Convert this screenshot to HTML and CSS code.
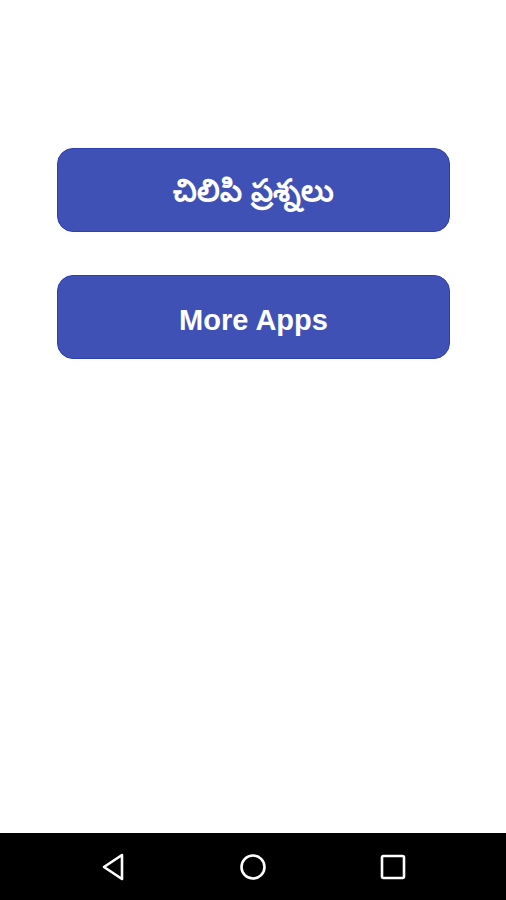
FILE: index.html
```html
<!DOCTYPE html>
<html lang="te">
<head>
    <meta charset="UTF-8">
    <meta name="viewport" content="width=device-width, initial-scale=1.0">
    <title>చిలిపి ప్రశ్నలు</title>
    <link rel="stylesheet" href="styles.css">
</head>
<body>
    <div class="screen">
        <div class="menu">
            <button class="menu_btn menu_btn_te">చిలిపి ప్రశ్నలు</button>
            <button class="menu_btn">More Apps</button>
        </div>
    </div>
    <div class="navbar">
        <svg class="nav_icon" width="26" height="30" viewBox="0 0 26 30">
            <path d="M22 3 L4 15 L22 27 Z" fill="none" stroke="#fff" stroke-width="2.6" stroke-linejoin="round"/>
        </svg>
        <svg class="nav_icon" width="30" height="30" viewBox="0 0 30 30">
            <circle cx="15" cy="15" r="11.5" fill="none" stroke="#fff" stroke-width="2.6"/>
        </svg>
        <svg class="nav_icon" width="28" height="28" viewBox="0 0 28 28">
            <rect x="3" y="3" width="22" height="22" rx="1.5" fill="none" stroke="#fff" stroke-width="2.6"/>
        </svg>
    </div>
</body>
</html>
```

FILE: styles.css
```css
body { margin: 0; background: #fff; font-family: "Noto Sans", "Liberation Sans", Arial, sans-serif;}
.screen { height: 833px;}
.menu { display: flex; flex-direction: column; gap: 43px; padding: 148px 56px 0 57px;}
.menu_btn { height: 84px; border: 1px solid #2e3fae; border-radius: 16px; background-color: #3f51b5; color: #fff; font-family: "Liberation Sans", "Noto Sans", sans-serif; font-size: 29px; font-weight: bold; padding: 7px 0 0;}
.menu_btn_te { font-size: 31px; padding-top: 9px;}
.navbar { height: 67px; background: #000; display: flex; justify-content: space-between; align-items: center; padding: 0 99px 0 100px;}
.nav_icon { display: block;}
```
